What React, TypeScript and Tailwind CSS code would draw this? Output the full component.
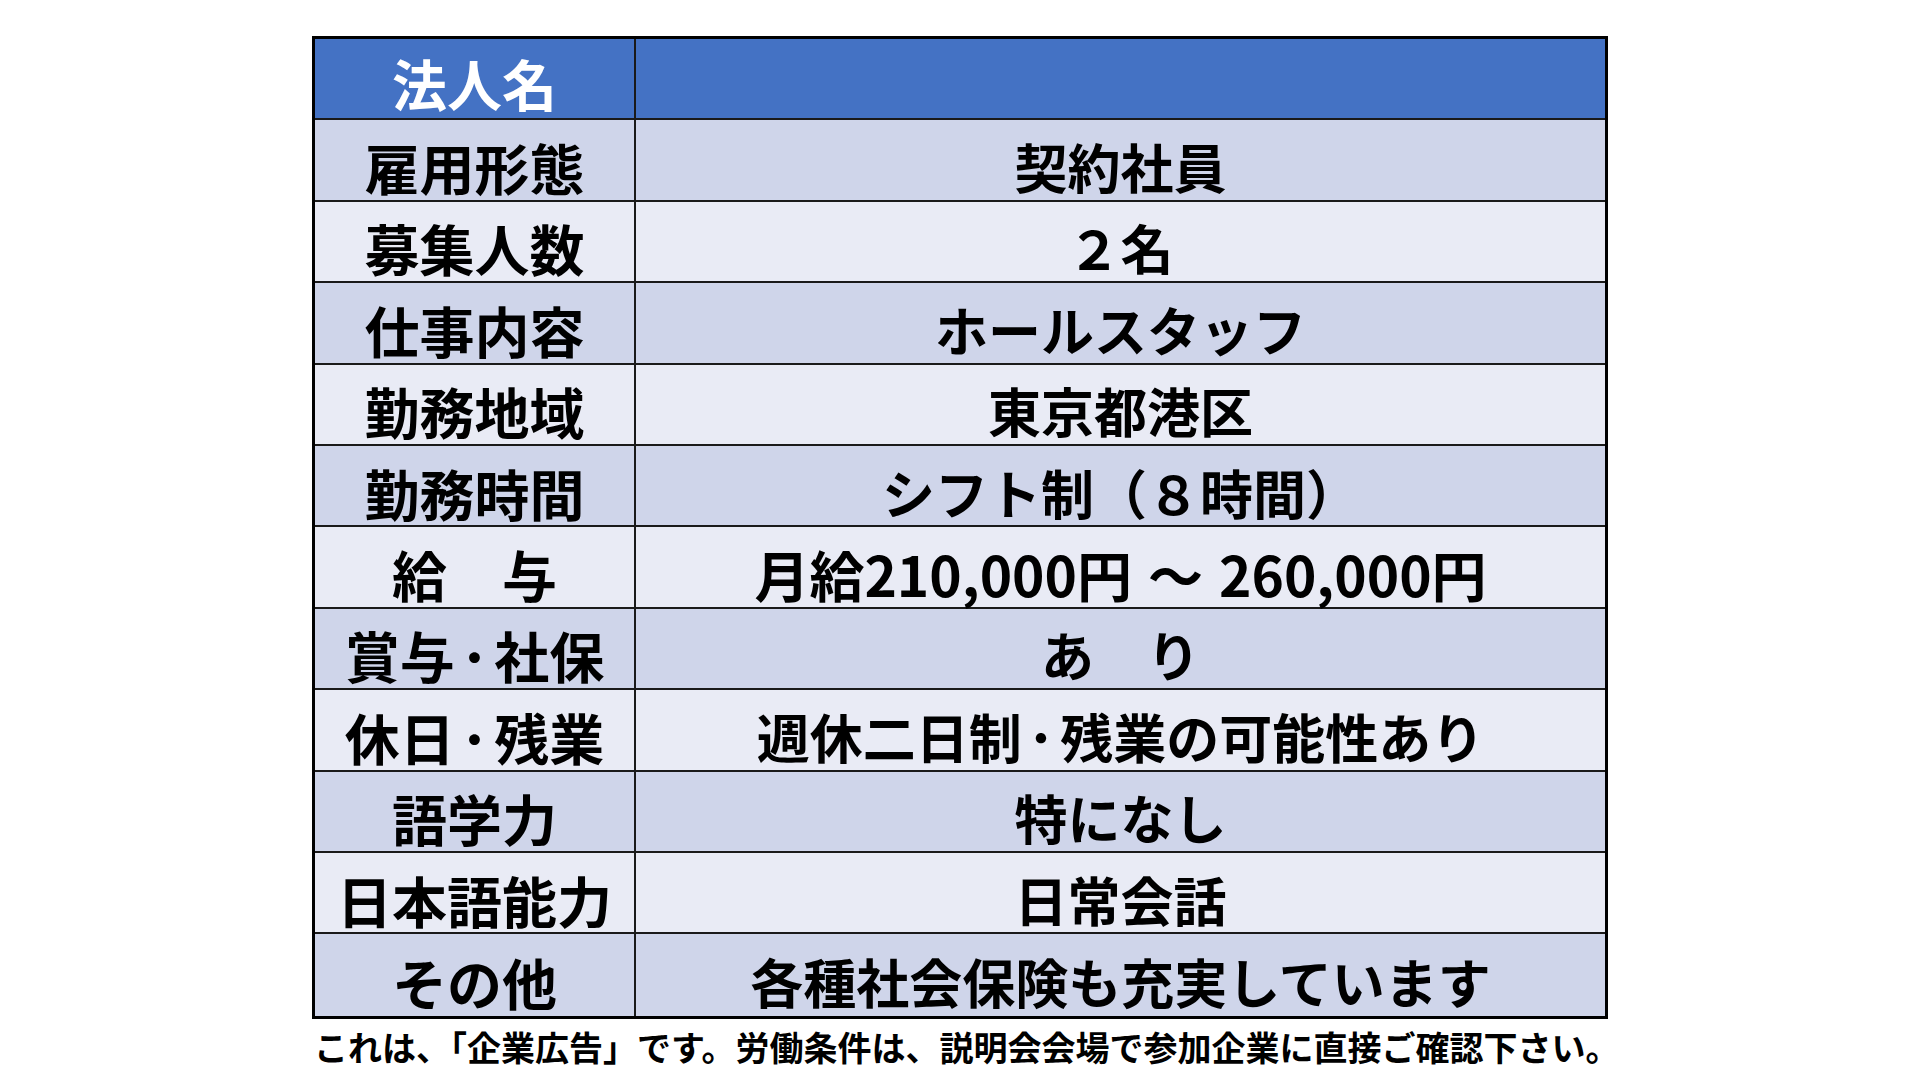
import type { ReactNode } from 'react'

// narrow middle dot like the original
const Dot = () => <span className="mx-[6px]">･</span>

const rows: [string, ReactNode][] = [
  ['雇用形態', '契約社員'],
  ['募集人数', '２名'],
  ['仕事内容', 'ホールスタッフ'],
  ['勤務地域', '東京都港区'],
  ['勤務時間', 'シフト制（８時間）'],
  [
    '給　与',
    <span className="text-[55px]">
      月給210,000円<span className="mx-[16px]">～</span>260,000円
    </span>,
  ],
  ['賞与・社保', 'あ　り'],
  [
    '休日・残業',
    <>
      週休二日制<Dot />残業の可能性あり
    </>,
  ],
  ['語学力', '特になし'],
  ['日本語能力', '日常会話'],
  ['その他', '各種社会保険も充実しています'],
]

const renderLabel = (label: string) => {
  const parts = label.split('・')
  if (parts.length < 2) return label
  return (
    <>
      {parts[0]}
      <Dot />
      {parts[1]}
    </>
  )
}

const App = () => {
  return (
    <div
      className="min-h-screen w-full bg-white pt-[36px]"
      style={{ fontFamily: '"Noto Sans CJK JP", "Noto Sans", sans-serif' }}
    >
      <div className="mx-auto w-[1296px]">
        <div className="flex flex-col border-[3px] border-black">
          {/* header row */}
          <div className="flex h-[81.4px] border-b-2 border-[#1a1a1a] bg-[#4472C4]">
            <div className="flex w-[321px] items-center justify-center border-r-2 border-[#1a1a1a] pt-[8px] text-[55px] font-bold leading-none text-white">
              法人名
            </div>
            <div className="flex-1" />
          </div>
          {rows.map(([label, value], i) => (
            <div
              key={label}
              className={
                'flex h-[81.4px] ' +
                (i < rows.length - 1 ? 'border-b-2 border-[#1a1a1a] ' : '') +
                (i % 2 === 0 ? 'bg-[#CFD5EA]' : 'bg-[#E9EBF5]')
              }
            >
              <div className="flex w-[321px] items-center justify-center whitespace-nowrap border-r-2 border-[#1a1a1a] pt-[13px] text-[55px] font-bold leading-none text-black">
                {renderLabel(label)}
              </div>
              <div className="flex flex-1 items-center justify-center whitespace-nowrap pt-[13px] text-[53px] font-bold leading-none text-black">
                {value}
              </div>
            </div>
          ))}
        </div>
        <p className="mt-[6px] whitespace-nowrap pl-[2px] text-[34px] font-bold leading-[44px] text-black">
          これは、「企業広告」です。労働条件は、説明会会場で参加企業に直接ご確認下さい。
        </p>
      </div>
    </div>
  )
}

export default App
